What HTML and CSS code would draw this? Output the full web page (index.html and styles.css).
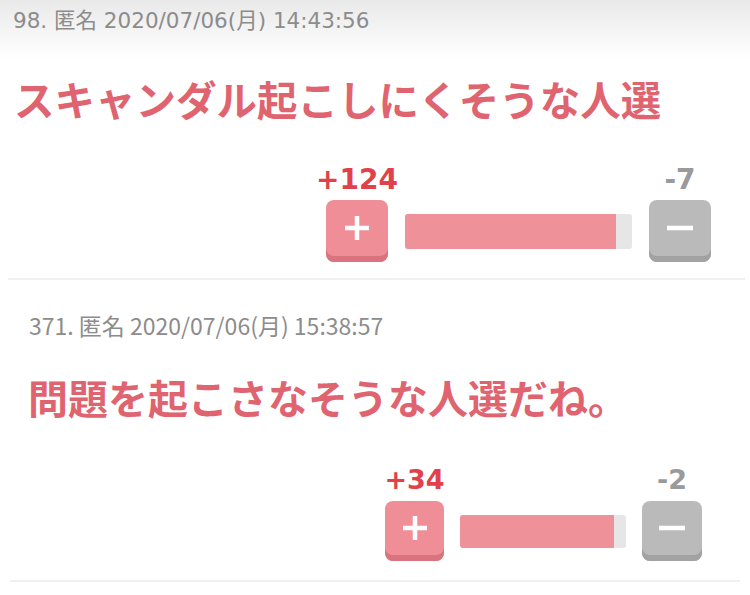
FILE: index.html
```html
<!DOCTYPE html>
<html lang="ja">

<head>
    <meta charset="UTF-8">
    <meta name="viewport" content="width=device-width, initial-scale=1.0">
    <title>コメント</title>
    <link rel="stylesheet" href="styles.css">
</head>

<body>
    <div class="comment comment-first">
        <div class="comment-head">98. 匿名 2020/07/06(月) 14:43:56</div>
        <div class="comment-body">スキャンダル起こしにくそうな人選</div>
        <div class="vote">
            <span class="vote-count plus-count">+124</span>
            <span class="vote-count minus-count">-7</span>
            <button class="vote-btn plus-btn">
                <svg viewBox="0 0 30 30"><path d="M15 3v24M3 15h24" /></svg>
            </button>
            <div class="vote-bar"><div class="vote-fill" style="width: 93%"></div></div>
            <button class="vote-btn minus-btn">
                <svg viewBox="0 0 30 30"><path d="M2 15h26" /></svg>
            </button>
        </div>
    </div>

    <div class="comment comment-second">
        <div class="comment-head">371. 匿名 2020/07/06(月) 15:38:57</div>
        <div class="comment-body">問題を起こさなそうな人選だね。</div>
        <div class="vote">
            <span class="vote-count plus-count">+34</span>
            <span class="vote-count minus-count">-2</span>
            <button class="vote-btn plus-btn">
                <svg viewBox="0 0 30 30"><path d="M15 3v24M3 15h24" /></svg>
            </button>
            <div class="vote-bar"><div class="vote-fill" style="width: 93%"></div></div>
            <button class="vote-btn minus-btn">
                <svg viewBox="0 0 30 30"><path d="M2 15h26" /></svg>
            </button>
        </div>
    </div>
</body>

</html>
```

FILE: styles.css
```css
html {
    font-family: "Noto Sans CJK JP", "Noto Sans", sans-serif;
}

body {
    margin: 0;
    width: 750px;
    height: 595px;
    overflow: hidden;
    background: linear-gradient(#e9e9e9 0, #f8f8f8 40px, #fff 60px) no-repeat;
    background-size: 100% 60px;
    background-color: #fff;
}

.comment {
    border-bottom: 2px solid #f0f0f0;
}

.comment-head {
    color: #8c8c8c;
    white-space: nowrap;
}

.comment-body {
    color: #e0646f;
    font-weight: bold;
    white-space: nowrap;
}

/* first comment */
.comment-first {
    height: 278px;
    margin: 0 5px 0 8px;
}

.comment-first .comment-head {
    padding: 5px 0 0 5px;
    height: 37px;
    font-family: "DejaVu Sans", "Noto Sans CJK JP", sans-serif;
    font-size: 21.5px;
    line-height: 32px;
}

.comment-first .comment-body {
    padding-left: 6px;
    font-size: 40.5px;
    line-height: 60px;
    margin-top: 27px;
}

.comment-first .vote {
    margin: 37px 34px 0 auto;
    grid-template-columns: 62px 227px 62px;
    column-gap: 17px;
    row-gap: 6px;
}

.comment-first .vote-btn {
    height: 62px;
}

.comment-first .vote-bar {
    height: 35px;
}

/* second comment */
.comment-second {
    height: 300px;
    margin: 0 10px;
}

.comment-second .comment-head {
    padding: 30px 0 0 19px;
    font-size: 23px;
    line-height: 30px;
}

.comment-second .comment-body {
    padding-left: 18px;
    font-size: 40px;
    line-height: 56px;
    margin-top: 29px;
}

.comment-second .vote {
    margin: 41px 38px 0 auto;
    grid-template-columns: 59px 166px 60px;
    column-gap: 16px;
    row-gap: 7px;
}

.comment-second .vote-btn {
    height: 60px;
}

.comment-second .vote-bar {
    height: 33px;
}

.comment-second .vote-count {
    font-size: 27px;
}

/* vote */
.vote {
    display: grid;
    width: fit-content;
    align-items: center;
}

.vote-count {
    grid-row: 1;
    justify-self: center;
    font-family: "DejaVu Sans", "Noto Sans", sans-serif;
    font-weight: bold;
    font-size: 28px;
    line-height: 28px;
}

.plus-count {
    grid-column: 1;
    color: #e0414a;
}

.minus-count {
    grid-column: 3;
    color: #9a9a9a;
}

.vote-btn {
    grid-row: 2;
    border: none;
    border-radius: 8px;
    display: flex;
    align-items: center;
    justify-content: center;
    padding: 0 0 6px;
}

.vote-btn svg {
    width: 30px;
    height: 30px;
    stroke: #fff;
    stroke-width: 4.5;
    fill: none;
}

.plus-btn {
    grid-column: 1;
    background: #ef8e96;
    box-shadow: inset 0 -6px 0 #d9747e;
}

.minus-btn {
    grid-column: 3;
    background: #bababa;
    box-shadow: inset 0 -6px 0 #a2a2a2;
}

.vote-bar {
    grid-row: 2;
    grid-column: 2;
    background: #e6e6e6;
    border-radius: 3px;
    overflow: hidden;
}

.vote-fill {
    height: 100%;
    background: #ef9199;
}
```
